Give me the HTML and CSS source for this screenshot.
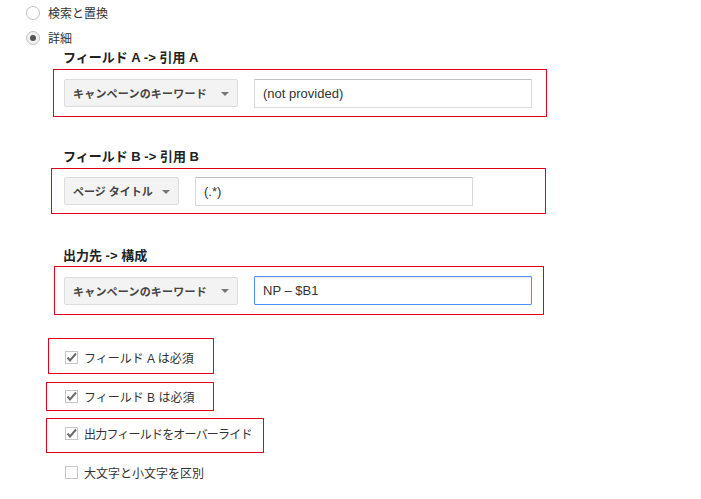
FILE: index.html
```html
<!DOCTYPE html>
<html lang="ja">
<head>
    <meta charset="UTF-8">
    <title>フィルタ設定</title>
    <link rel="stylesheet" href="styles.css">
</head>
<body>

<div class="page">
  <label class="radio-row"><span class="radio"></span>検索と置換</label>
  <label class="radio-row"><span class="radio radio-on"></span>詳細</label>

  <div class="field-label label-a">フィールド A -&gt; 引用 A</div>
  <div class="mark mark-a">
    <div class="dropdown dropdown-wide">キャンペーンのキーワード<span class="caret"></span></div>
    <input class="text-input" type="text" value="(not provided)">
  </div>

  <div class="field-label label-b">フィールド B -&gt; 引用 B</div>
  <div class="mark mark-b">
    <div class="dropdown dropdown-narrow">ページ タイトル<span class="caret"></span></div>
    <input class="text-input" type="text" value="(.*)">
  </div>

  <div class="field-label label-c">出力先 -&gt; 構成</div>
  <div class="mark mark-c">
    <div class="dropdown dropdown-wide">キャンペーンのキーワード<span class="caret"></span></div>
    <input class="text-input text-input-focus" type="text" value="NP – $B1">
  </div>

  <div class="mark check-mark check-mark-1">
    <label class="check-row">
      <span class="checkbox"><svg width="13" height="13" viewBox="0 0 13 13"><path d="M2.5 6.5 L5 9.5 L11 2.5" fill="none" stroke="#6b6b6b" stroke-width="2"/></svg></span>
      フィールド A は必須
    </label>
  </div>
  <div class="mark check-mark check-mark-2">
    <label class="check-row">
      <span class="checkbox"><svg width="13" height="13" viewBox="0 0 13 13"><path d="M2.5 6.5 L5 9.5 L11 2.5" fill="none" stroke="#6b6b6b" stroke-width="2"/></svg></span>
      フィールド B は必須
    </label>
  </div>
  <div class="mark check-mark check-mark-3">
    <label class="check-row">
      <span class="checkbox"><svg width="13" height="13" viewBox="0 0 13 13"><path d="M2.5 6.5 L5 9.5 L11 2.5" fill="none" stroke="#6b6b6b" stroke-width="2"/></svg></span>
      <span class="check-text-tight">出力フィールドをオーバーライド</span>
    </label>
  </div>
  <label class="check-row check-plain">
    <span class="checkbox"></span>
    大文字と小文字を区別
  </label>
</div>

</body>
</html>
```

FILE: styles.css
```css
body {
  margin: 0;
  background: #fff;
  color: #333;
  font-family: "Liberation Sans", "Noto Sans CJK JP", sans-serif;
  font-size: 12px;
}

.page {
  display: flex;
  flex-direction: column;
  align-items: flex-start;
}

/* radios */
.radio-row {
  display: flex;
  align-items: center;
  gap: 8px;
  height: 25px;
  margin-left: 26px;
  font-size: 12px;
  color: #333;
}

.radio {
  width: 14px;
  height: 14px;
  box-sizing: border-box;
  border: 1px solid #c2c2c2;
  border-radius: 50%;
  background: #fff;
  display: flex;
  align-items: center;
  justify-content: center;
}

.radio-on {
  background: #f1f1f1;
}

.radio-on::after {
  content: "";
  width: 6px;
  height: 6px;
  border-radius: 50%;
  background: #555;
}

/* field labels */
.field-label {
  margin-left: 63px;
  font-size: 13px;
  font-weight: bold;
  line-height: 16px;
  height: 16px;
  color: #222;
}
.label-b { margin-top: 32px; }
.label-c { margin-top: 34px; }

/* red annotation boxes */
.mark {
  border: 1px solid #e0001b;
  box-sizing: border-box;
  display: flex;
  align-items: center;
  gap: 16px;
}

.mark-a {
  margin: 3px 0 0 53px;
  width: 494px;
  height: 48px;
  padding-left: 10px;
}
.mark-b {
  margin: 3px 0 0 51px;
  width: 495px;
  height: 46px;
  padding-left: 12px;
}
.mark-c {
  margin: 2px 0 0 54px;
  width: 490px;
  height: 49px;
  padding-left: 9px;
}

.dropdown {
  display: flex;
  align-items: center;
  justify-content: space-between;
  height: 28px;
  box-sizing: border-box;
  padding: 0 8px;
  background: #f3f3f3;
  border: 1px solid #dcdcdc;
  border-radius: 2px;
  font-size: 11px;
  font-weight: bold;
  color: #444;
  white-space: nowrap;
}
.dropdown-wide { width: 174px; letter-spacing: 0.2px; }
.dropdown-narrow { width: 115px; }

.caret {
  width: 0;
  height: 0;
  border-left: 4px solid transparent;
  border-right: 4px solid transparent;
  border-top: 4px solid #777;
  margin-top: 1px;
}

.text-input {
  width: 278px;
  height: 29px;
  box-sizing: border-box;
  margin: 0;
  padding: 0 8px;
  border: 1px solid #d9d9d9;
  border-top-color: #c0c0c0;
  border-radius: 1px;
  font-family: "Liberation Sans", "Noto Sans CJK JP", sans-serif;
  font-size: 13px;
  color: #333;
  outline: none;
}

.text-input-focus {
  border: 1px solid #4d90fe;
  box-shadow: inset 0 1px 2px rgba(0, 0, 0, 0.1);
}

/* checkboxes */
.check-mark {
  align-items: flex-start;
}
.check-mark-1 {
  margin: 23px 0 0 48px;
  width: 166px;
  height: 36px;
  padding: 12px 0 0 16px;
}
.check-mark-2 {
  margin: 8px 0 0 46px;
  width: 168px;
  height: 29px;
  padding: 7px 0 0 18px;
}
.check-mark-3 {
  margin: 7px 0 0 46px;
  width: 218px;
  height: 35px;
  padding: 8px 0 0 18px;
}

.check-row {
  display: flex;
  align-items: center;
  gap: 6px;
  height: 13px;
  font-size: 12px;
  color: #333;
  white-space: nowrap;
}

.check-text-tight {
  letter-spacing: -0.8px;
}

.check-plain {
  margin: 13px 0 0 65px;
}

.checkbox {
  width: 13px;
  height: 13px;
  box-sizing: border-box;
  border: 1px solid #c6c6c6;
  background: #fff;
  display: flex;
  align-items: center;
  justify-content: center;
}

.checkbox svg {
  flex: none;
}
```
